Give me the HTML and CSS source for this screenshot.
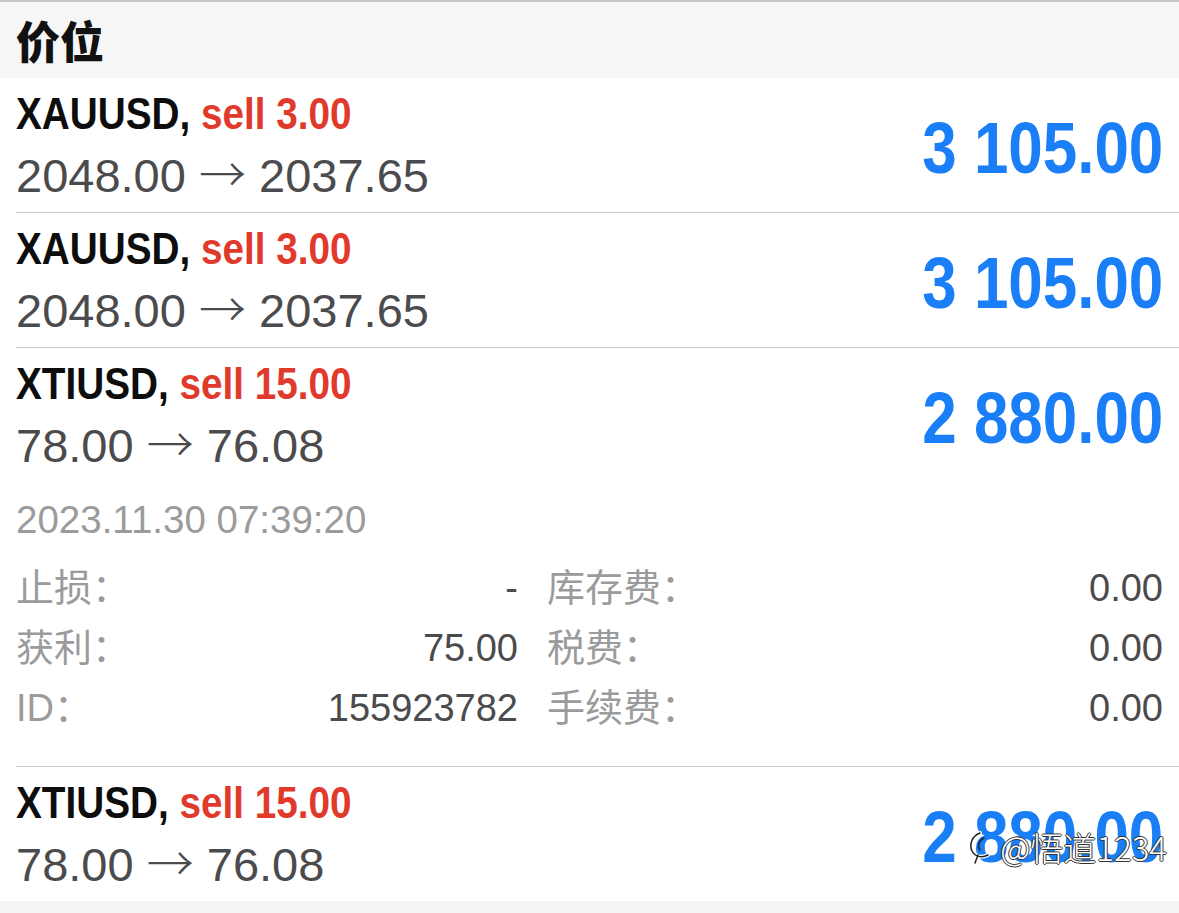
FILE: index.html
```html
<!DOCTYPE html>
<html>
<head>
    <meta charset="UTF-8">
    <title>价位</title>
    <link rel="stylesheet" href="styles.css">
</head>
<body>
  <div class="header">价位</div>

  <div class="list">
    <div class="row">
      <div class="head">
        <div class="info">
          <div class="title">XAUUSD, <span class="side">sell 3.00</span></div>
          <div class="price">2048.00 <span class="arrow">→</span> 2037.65</div>
        </div>
        <div class="profit">3 105.00</div>
      </div>
    </div>

    <div class="row">
      <div class="head">
        <div class="info">
          <div class="title">XAUUSD, <span class="side">sell 3.00</span></div>
          <div class="price">2048.00 <span class="arrow">→</span> 2037.65</div>
        </div>
        <div class="profit">3 105.00</div>
      </div>
    </div>

    <!-- expanded position -->
    <div class="row">
      <div class="head">
        <div class="info">
          <div class="title">XTIUSD, <span class="side">sell 15.00</span></div>
          <div class="price">78.00 <span class="arrow">→</span> 76.08</div>
        </div>
        <div class="profit">2 880.00</div>
      </div>
      <div class="date">2023.11.30 07:39:20</div>
      <div class="details">
        <div class="cell"><span class="label">止损：</span><span class="value">-</span></div>
        <div class="cell"><span class="label">库存费：</span><span class="value">0.00</span></div>
        <div class="cell"><span class="label">获利：</span><span class="value">75.00</span></div>
        <div class="cell"><span class="label">税费：</span><span class="value">0.00</span></div>
        <div class="cell"><span class="label">ID：</span><span class="value">155923782</span></div>
        <div class="cell"><span class="label">手续费：</span><span class="value">0.00</span></div>
      </div>
    </div>

    <div class="row last">
      <div class="head">
        <div class="info">
          <div class="title">XTIUSD, <span class="side">sell 15.00</span></div>
          <div class="price">78.00 <span class="arrow">→</span> 76.08</div>
        </div>
        <div class="profit">2 880.00</div>
      </div>
      <div class="watermark">
        <svg class="wm-icon" width="32" height="44" viewBox="0 0 32 44">
          <g fill="none" stroke-linecap="round">
            <path d="M14 8 C6 11 3 19 6 26 C9 32 16 33 22 30" stroke="#fff" stroke-width="4"/>
            <path d="M14 8 C6 11 3 19 6 26 C9 32 16 33 22 30" stroke="#222" stroke-width="1.5"/>
            <path d="M18 13 C13 15 11 21 14 25" stroke="#222" stroke-width="1.5"/>
            <path d="M9 38 L12 30" stroke="#222" stroke-width="1.5"/>
          </g>
        </svg>
        <span>@悟道1234</span>
      </div>
    </div>
  </div>
</body>
</html>
```

FILE: styles.css
```css
body {
    margin: 0;
    background-color: #f4f4f4;
    font-family: "Liberation Sans", "Noto Sans CJK SC", sans-serif;
}

.header {
    height: 76px;
    padding-left: 16px;
    border-top: 2px solid #c9c9c9;
    background-color: #f6f6f6;
    color: #111;
    font-family: "Noto Sans CJK SC", sans-serif;
    font-weight: 900;
    font-size: 44px;
    line-height: 76px;
}

.list {
    background-color: #fff;
}

.row {
    margin-left: 16px;
    padding-right: 16px;
    border-bottom: 1px solid #cbcbcb;
}

.row.last {
    position: relative;
    border-bottom: none;
}

.head {
    display: flex;
    justify-content: space-between;
    align-items: center;
    padding: 10px 0 4px;
}

/* no condensed face installed, so squeeze the bold one */
.title {
    color: #0d0d0d;
    font-weight: bold;
    font-size: 45px;
    line-height: 52px;
    transform: scaleX(0.86);
    transform-origin: left center;
    white-space: nowrap;
}

.side {
    color: #e03a2c;
}

.price {
    margin-top: 4px;
    color: #4b4b4d;
    font-size: 47px;
    line-height: 64px;
    white-space: nowrap;
}

.arrow {
    font-family: "Noto Sans CJK SC", sans-serif;
    font-weight: 300;
    line-height: 1;
}

.profit {
    color: #1a7ff7;
    font-weight: bold;
    font-size: 72px;
    line-height: 84px;
    transform: scaleX(0.86);
    transform-origin: right center;
    white-space: nowrap;
}

.date {
    padding-top: 16px;
    color: #9b9b9b;
    font-size: 38.5px;
    line-height: 44px;
}

.details {
    display: grid;
    grid-template-columns: 502px 1fr;
    column-gap: 29px;
    margin-top: 16px;
    padding-bottom: 28px;
}

.cell {
    display: flex;
    justify-content: space-between;
    font-size: 38px;
    line-height: 60px;
}

.label {
    color: #9b9b9b;
}

.value {
    color: #4b4b4d;
}

.watermark {
    position: absolute;
    right: 12px;
    top: 58px;
    display: flex;
    align-items: center;
    gap: 2px;
    color: #fff;
    font-family: "Noto Sans CJK SC", sans-serif;
    font-weight: 300;
    font-size: 33px;
    line-height: 44px;
    text-shadow: 1px 0 0 #333, -1px 0 0 #333, 0 1px 0 #333, 0 -1px 0 #333;
}
```
